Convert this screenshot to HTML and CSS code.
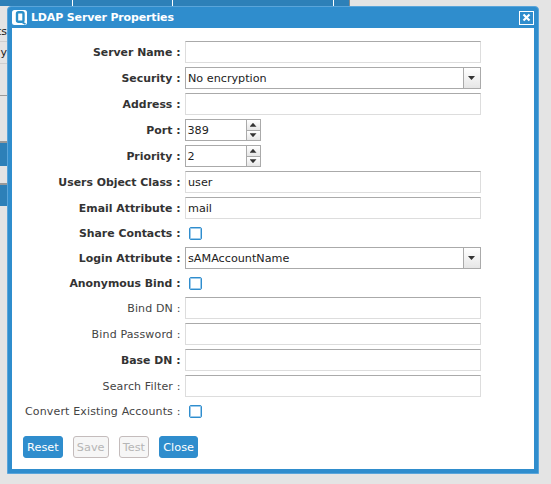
FILE: index.html
```html
<!DOCTYPE html>
<html lang="en">
<head>
<meta charset="utf-8">
<title>LDAP Server Properties</title>
<link rel="stylesheet" href="styles.css">
</head>
<body>
<div class="page">
  <div class="topbar">
    <div class="tab tab-a"></div>
    <div class="tab tab-b"></div>
    <div class="tab tab-c"></div>
    <div class="tab tab-d"></div>
  </div>
  <div class="side">
    <div class="side-row r1">ts</div>
    <div class="side-row r2">y</div>
    <div class="side-row r3"></div>
    <div class="side-item i1"></div>
    <div class="side-item i2"></div>
  </div>
</div>

<div class="dialog">
  <div class="titlebar">
    <svg class="logo" width="15" height="15" viewBox="0 0 15 15"><rect x="0" y="0" width="15" height="15" rx="2.500" fill="#fff"/><rect x="5" y="2.200" width="6.500" height="9.600" rx="1.500" fill="none" stroke="#2a8fc9" stroke-width="2.400"/><path d="M10.500 12.500l3 1.500" stroke="#2a8fc9" stroke-width="1.800"/></svg>
    <span class="title">LDAP Server Properties</span>
    <span class="close"><svg width="9" height="9" viewBox="0 0 9 9"><path d="M1.500 1.500l6 6M7.500 1.500l-6 6" stroke="#fff" stroke-width="2.200"/></svg></span>
  </div>
  <div class="body">
    <div class="row"><label class="lbl req">Server Name :</label><div class="field"></div></div>
    <div class="row"><label class="lbl req">Security :</label><div class="field combo"><span class="val">No encryption</span><span class="arrow"><i class="down"></i></span></div></div>
    <div class="row"><label class="lbl req">Address :</label><div class="field"></div></div>
    <div class="row"><label class="lbl req">Port :</label><div class="spin"><div class="field num"><span class="val">389</span></div><div class="btns"><span class="sb"><i class="up"></i></span><span class="sb"><i class="down"></i></span></div></div></div>
    <div class="row"><label class="lbl req">Priority :</label><div class="spin"><div class="field num"><span class="val">2</span></div><div class="btns"><span class="sb"><i class="up"></i></span><span class="sb"><i class="down"></i></span></div></div></div>
    <div class="row"><label class="lbl req">Users Object Class :</label><div class="field"><span class="val">user</span></div></div>
    <div class="row"><label class="lbl req">Email Attribute :</label><div class="field"><span class="val">mail</span></div></div>
    <div class="row short"><label class="lbl req">Share Contacts :</label><span class="check"></span></div>
    <div class="row"><label class="lbl req">Login Attribute :</label><div class="field combo"><span class="val">sAMAccountName</span><span class="arrow"><i class="down"></i></span></div></div>
    <div class="row short"><label class="lbl req">Anonymous Bind :</label><span class="check"></span></div>
    <div class="row"><label class="lbl">Bind DN :</label><div class="field"></div></div>
    <div class="row"><label class="lbl">Bind Password :</label><div class="field"></div></div>
    <div class="row"><label class="lbl req">Base DN :</label><div class="field"></div></div>
    <div class="row"><label class="lbl">Search Filter :</label><div class="field"></div></div>
    <div class="row short"><label class="lbl">Convert Existing Accounts :</label><span class="check"></span></div>
    <div class="actions">
      <button class="btn">Reset</button>
      <button class="btn off">Save</button>
      <button class="btn off">Test</button>
      <button class="btn">Close</button>
    </div>
  </div>
</div>
</body>
</html>
```

FILE: styles.css
```css
* { box-sizing: border-box; }
html, body { margin: 0; height: 100%; }
body {
  background: #e4e4e4;
  font-family: "DejaVu Sans", sans-serif;
  font-size: 11px;
  color: #333;
  overflow: hidden;
}
.page { width: 551px; height: 484px; }

.topbar { display: flex; height: 6px; }
.tab { background: #2d80b8; border-right: 1px solid #fff; }
.tab-a { width: 73px; }
.tab-b { width: 100px; }
.tab-c { width: 161px; }
.tab-d { width: 16px; border-right: 1px solid #8a8a8a; }

.side { width: 7px; overflow: hidden; font-size: 11px; }
.side-row { height: 22px; line-height: 21px; border-bottom: 1px solid #cfcfcf; white-space: nowrap; direction: rtl; color: #222; }
.r1 { height: 36px; line-height: 52px; }
.r3 { height: 32px; border-bottom: 1px solid #9a9a9a; }
.side-item { background: #2d80b8; border-top: 2px solid #999; }
.i1 { height: 25px; margin-top: 45px; }
.i2 { height: 23px; margin-top: 17px; }

.dialog {
  position: absolute;
  left: 7px;
  top: 6px;
  width: 532px;
  height: 468px;
  background: #2f8dcd;
  border: 1px solid #5aa5da;
  border-radius: 4px 4px 0 0;
  padding: 0 4px 4px 4px;
  display: flex;
  flex-direction: column;
}
.titlebar { height: 21px; flex: none; display: flex; align-items: center; gap: 4px; }
.logo { flex: none; }
.title { flex: 1; color: #fff; font-weight: bold; font-size: 11px; letter-spacing: -0.15px; }
.close {
  width: 15px; height: 14px;
  border: 1px solid #fff;
  display: flex; align-items: center; justify-content: center;
}
.body { flex: 1; background: #fff; padding: 13px 0 0 0; display: flex; flex-direction: column; gap: 4px; }

.row { display: flex; align-items: center; height: 22px; flex: none; }
.row.short { height: 20px; }
.lbl { width: 170.500px; flex: none; text-align: right; color: #444; padding-right: 2px; white-space: nowrap; letter-spacing: 0.15px; }
.lbl.req { font-weight: bold; color: #333; font-size: 10.900px; letter-spacing: 0; }

.field {
  width: 296px; height: 22px; flex: none; margin-left: 2px;
  border: 1px solid #ddd;
  border-top: 1px solid #aaa;
  background: #fff;
  display: flex; align-items: center;
  padding-left: 2.500px;
  font-size: 11.200px;
  color: #222;
}
.field.combo { border: 1px solid #aaa; justify-content: space-between; }
.val { padding-top: 1px; }
.arrow {
  width: 17px; height: 100%; flex: none;
  border-left: 1px solid #aaa;
  background: linear-gradient(#fff, #e6e6e6);
  display: flex; align-items: center; justify-content: center;
}
.down, .up { width: 7px; height: 4px; background: #333; display: block; }
.down { clip-path: polygon(0 0, 100% 0, 50% 100%); }
.up { clip-path: polygon(50% 0, 100% 100%, 0 100%); }

.spin { display: flex; height: 22px; margin-left: 2px; }
.field.num { width: 61px; margin-left: 0; border: 1px solid #aaa; border-right: 0; padding-left: 2px; }
.btns { width: 15px; display: flex; flex-direction: column; border: 1px solid #aaa; border-top: 0; border-bottom: 0; }
.sb {
  flex: 1; display: flex; align-items: center; justify-content: center;
  background: linear-gradient(#fff, #e6e6e6);
  border-top: 1px solid #aaa; border-bottom: 1px solid #aaa;
}
.sb + .sb { border-top: 0; }

.check { width: 13px; height: 13px; margin-left: 6px; border: 1px solid #2f8dcd; border-radius: 2px; box-shadow: inset 0 0 0 1px #9ccbec; background: #fff; flex: none; }

.actions { display: flex; gap: 10px; padding: 11px 0 0 11px; }
.btn {
  height: 22px; padding: 0 3.100px;
  font: 11.300px "DejaVu Sans", sans-serif;
  background: #2f8dcd; color: #fff;
  border: 1px solid #2f8dcd; border-radius: 3px;
}
.btn.off { background: #f6f6f6; color: #b5b5b5; border-color: #c4bcbc; }
```
